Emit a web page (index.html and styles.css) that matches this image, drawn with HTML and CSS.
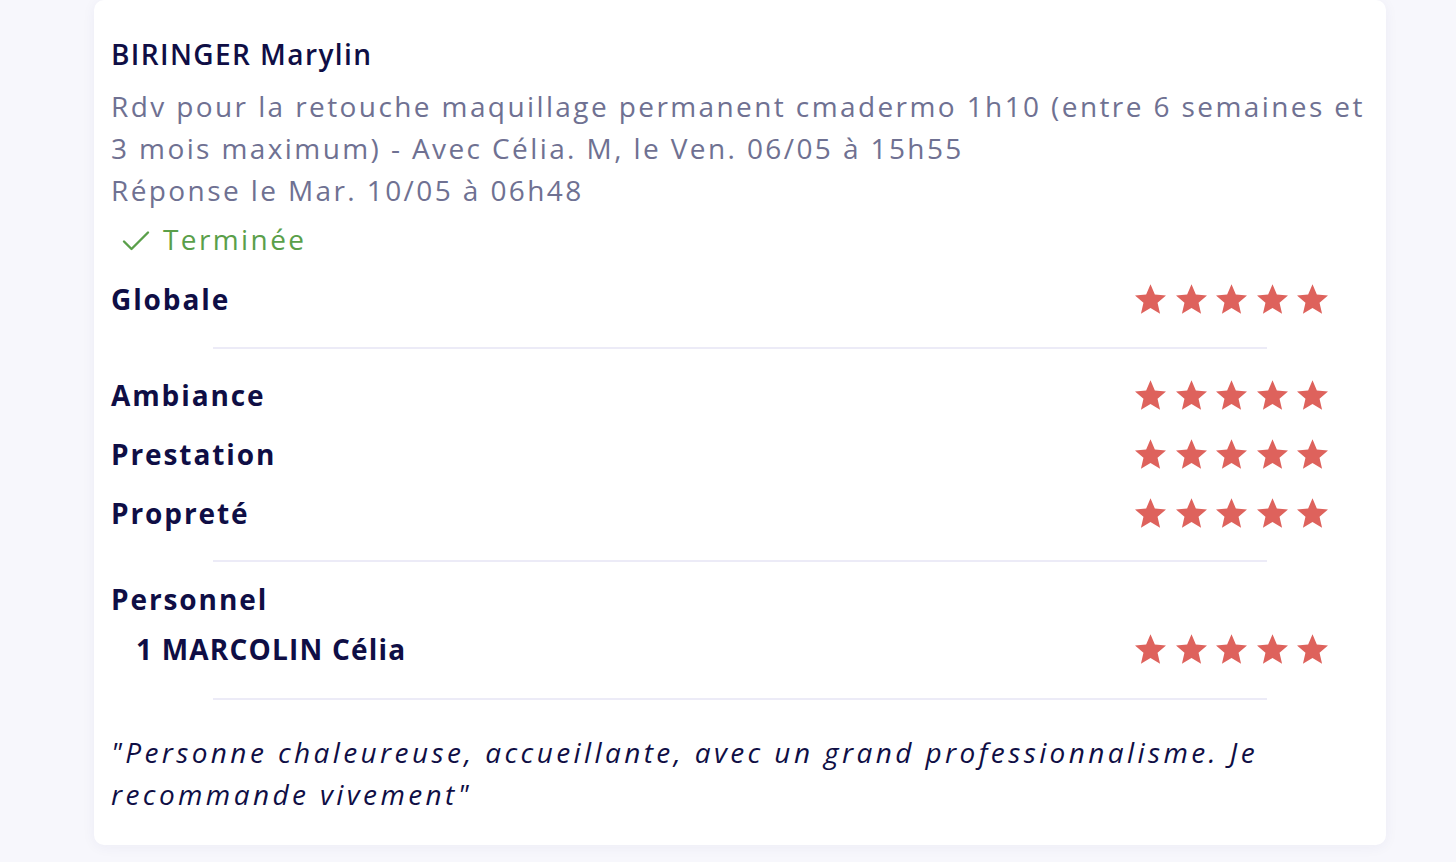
FILE: index.html
```html
<!DOCTYPE html>
<html lang="fr">
<head>
<meta charset="utf-8">
<title>Avis</title>
<link rel="stylesheet" href="styles.css">
</head>
<body>
<div class="page">
  <div class="card">
    <h2 class="name">BIRINGER Marylin</h2>
    <p class="desc">Rdv pour la retouche maquillage permanent cmadermo 1h10 (entre 6 semaines et 3 mois maximum) - Avec Célia. M, le Ven. 06/05 à 15h55</p>
    <p class="desc">Réponse le Mar. 10/05 à 06h48</p>
    <div class="status">
      <svg class="check" width="28" height="22" viewBox="0 0 28 22"><path d="M2 11.5 L9.5 19 L26 2.5" fill="none" stroke="#5a9f4a" stroke-width="2.4" stroke-linecap="round" stroke-linejoin="round"/></svg>
      <span>Terminée</span>
    </div>

    <div class="row row-global">
      <span class="label">Globale</span>
      <div class="stars">
        <svg viewBox="2 2 20 19"><path d="M12 17.27L18.18 21l-1.64-7.03L22 9.24l-7.19-.61L12 2 9.19 8.63 2 9.24l5.46 4.73L5.82 21z"/></svg>
        <svg viewBox="2 2 20 19"><path d="M12 17.27L18.18 21l-1.64-7.03L22 9.24l-7.19-.61L12 2 9.19 8.63 2 9.24l5.46 4.73L5.82 21z"/></svg>
        <svg viewBox="2 2 20 19"><path d="M12 17.27L18.18 21l-1.64-7.03L22 9.24l-7.19-.61L12 2 9.19 8.63 2 9.24l5.46 4.73L5.82 21z"/></svg>
        <svg viewBox="2 2 20 19"><path d="M12 17.27L18.18 21l-1.64-7.03L22 9.24l-7.19-.61L12 2 9.19 8.63 2 9.24l5.46 4.73L5.82 21z"/></svg>
        <svg viewBox="2 2 20 19"><path d="M12 17.27L18.18 21l-1.64-7.03L22 9.24l-7.19-.61L12 2 9.19 8.63 2 9.24l5.46 4.73L5.82 21z"/></svg>
      </div>
    </div>

    <hr class="divider divider-1">

    <div class="row row-first">
      <span class="label">Ambiance</span>
      <div class="stars">
        <svg viewBox="2 2 20 19"><path d="M12 17.27L18.18 21l-1.64-7.03L22 9.24l-7.19-.61L12 2 9.19 8.63 2 9.24l5.46 4.73L5.82 21z"/></svg>
        <svg viewBox="2 2 20 19"><path d="M12 17.27L18.18 21l-1.64-7.03L22 9.24l-7.19-.61L12 2 9.19 8.63 2 9.24l5.46 4.73L5.82 21z"/></svg>
        <svg viewBox="2 2 20 19"><path d="M12 17.27L18.18 21l-1.64-7.03L22 9.24l-7.19-.61L12 2 9.19 8.63 2 9.24l5.46 4.73L5.82 21z"/></svg>
        <svg viewBox="2 2 20 19"><path d="M12 17.27L18.18 21l-1.64-7.03L22 9.24l-7.19-.61L12 2 9.19 8.63 2 9.24l5.46 4.73L5.82 21z"/></svg>
        <svg viewBox="2 2 20 19"><path d="M12 17.27L18.18 21l-1.64-7.03L22 9.24l-7.19-.61L12 2 9.19 8.63 2 9.24l5.46 4.73L5.82 21z"/></svg>
      </div>
    </div>
    <div class="row row-next">
      <span class="label">Prestation</span>
      <div class="stars">
        <svg viewBox="2 2 20 19"><path d="M12 17.27L18.18 21l-1.64-7.03L22 9.24l-7.19-.61L12 2 9.19 8.63 2 9.24l5.46 4.73L5.82 21z"/></svg>
        <svg viewBox="2 2 20 19"><path d="M12 17.27L18.18 21l-1.64-7.03L22 9.24l-7.19-.61L12 2 9.19 8.63 2 9.24l5.46 4.73L5.82 21z"/></svg>
        <svg viewBox="2 2 20 19"><path d="M12 17.27L18.18 21l-1.64-7.03L22 9.24l-7.19-.61L12 2 9.19 8.63 2 9.24l5.46 4.73L5.82 21z"/></svg>
        <svg viewBox="2 2 20 19"><path d="M12 17.27L18.18 21l-1.64-7.03L22 9.24l-7.19-.61L12 2 9.19 8.63 2 9.24l5.46 4.73L5.82 21z"/></svg>
        <svg viewBox="2 2 20 19"><path d="M12 17.27L18.18 21l-1.64-7.03L22 9.24l-7.19-.61L12 2 9.19 8.63 2 9.24l5.46 4.73L5.82 21z"/></svg>
      </div>
    </div>
    <div class="row row-next">
      <span class="label">Propreté</span>
      <div class="stars">
        <svg viewBox="2 2 20 19"><path d="M12 17.27L18.18 21l-1.64-7.03L22 9.24l-7.19-.61L12 2 9.19 8.63 2 9.24l5.46 4.73L5.82 21z"/></svg>
        <svg viewBox="2 2 20 19"><path d="M12 17.27L18.18 21l-1.64-7.03L22 9.24l-7.19-.61L12 2 9.19 8.63 2 9.24l5.46 4.73L5.82 21z"/></svg>
        <svg viewBox="2 2 20 19"><path d="M12 17.27L18.18 21l-1.64-7.03L22 9.24l-7.19-.61L12 2 9.19 8.63 2 9.24l5.46 4.73L5.82 21z"/></svg>
        <svg viewBox="2 2 20 19"><path d="M12 17.27L18.18 21l-1.64-7.03L22 9.24l-7.19-.61L12 2 9.19 8.63 2 9.24l5.46 4.73L5.82 21z"/></svg>
        <svg viewBox="2 2 20 19"><path d="M12 17.27L18.18 21l-1.64-7.03L22 9.24l-7.19-.61L12 2 9.19 8.63 2 9.24l5.46 4.73L5.82 21z"/></svg>
      </div>
    </div>

    <hr class="divider divider-2">

    <div class="label section">Personnel</div>
    <div class="row row-staff">
      <span class="label staff-name">1 MARCOLIN Célia</span>
      <div class="stars">
        <svg viewBox="2 2 20 19"><path d="M12 17.27L18.18 21l-1.64-7.03L22 9.24l-7.19-.61L12 2 9.19 8.63 2 9.24l5.46 4.73L5.82 21z"/></svg>
        <svg viewBox="2 2 20 19"><path d="M12 17.27L18.18 21l-1.64-7.03L22 9.24l-7.19-.61L12 2 9.19 8.63 2 9.24l5.46 4.73L5.82 21z"/></svg>
        <svg viewBox="2 2 20 19"><path d="M12 17.27L18.18 21l-1.64-7.03L22 9.24l-7.19-.61L12 2 9.19 8.63 2 9.24l5.46 4.73L5.82 21z"/></svg>
        <svg viewBox="2 2 20 19"><path d="M12 17.27L18.18 21l-1.64-7.03L22 9.24l-7.19-.61L12 2 9.19 8.63 2 9.24l5.46 4.73L5.82 21z"/></svg>
        <svg viewBox="2 2 20 19"><path d="M12 17.27L18.18 21l-1.64-7.03L22 9.24l-7.19-.61L12 2 9.19 8.63 2 9.24l5.46 4.73L5.82 21z"/></svg>
      </div>
    </div>

    <hr class="divider divider-3">

    <p class="quote">"Personne chaleureuse, accueillante, avec un grand professionnalisme. Je recommande vivement"</p>
  </div>
</div>
</body>
</html>
```

FILE: styles.css
```css
* { box-sizing: border-box; }

html, body {
  margin: 0;
  padding: 0;
  background: #f7f7fc;
}

body {
  font-family: "Open Sans", "Liberation Sans", sans-serif;
  color: #0f0e45;
  height: 862px;
  overflow: hidden;
}

.page {
  padding-left: 94px;
}

.card {
  width: 1292px;
  background: #ffffff;
  border-radius: 10px;
  box-shadow: 0 2px 14px rgba(40, 40, 110, 0.05);
  padding: 33px 17px 30px 17px;
}

.name {
  margin: 0;
  font-size: 28px;
  line-height: 42px;
  font-weight: 600;
  letter-spacing: 1.4px;
  color: #0f0e45;
}

.desc {
  margin: 0;
  font-size: 28px;
  line-height: 42px;
  font-weight: 400;
  letter-spacing: 2.4px;
  color: #6f7192;
}

.name + .desc { margin-top: 10px; }

.status {
  display: flex;
  align-items: center;
  margin-top: 7px;
  padding-left: 11px;
  height: 42px;
  font-size: 28px;
  line-height: 42px;
  letter-spacing: 2.4px;
  color: #5a9f4a;
}

.check {
  display: block;
  margin-right: 13px;
  margin-top: 4px;
}

.row {
  display: flex;
  align-items: center;
  justify-content: space-between;
  height: 42px;
  padding-right: 41px;
}

.row-global { margin-top: 18px; }
.row-first { margin-top: 25px; }
.row-next { margin-top: 17px; }
.row-staff { margin-top: 8px; }

.label {
  font-size: 28px;
  line-height: 42px;
  font-weight: 700;
  letter-spacing: 1.9px;
  color: #0f0e45;
}

.section {
  margin-top: 16px;
}

.staff-name {
  padding-left: 25px;
  letter-spacing: 1.2px;
}

.stars {
  display: flex;
  gap: 9.5px;
}

.stars svg {
  width: 31px;
  height: 30px;
  display: block;
  fill: #de625c;
}

.divider {
  border: 0;
  height: 2px;
  background: #ecebf7;
  margin: 0 102px;
}

.divider-1 { margin-top: 27px; }
.divider-2 { margin-top: 26px; }
.divider-3 { margin-top: 28px; }

.quote {
  margin: 31px 0 0 0;
  font-size: 28px;
  line-height: 42px;
  font-style: italic;
  font-weight: 500;
  letter-spacing: 3.4px;
  color: #0f0e45;
}
```
